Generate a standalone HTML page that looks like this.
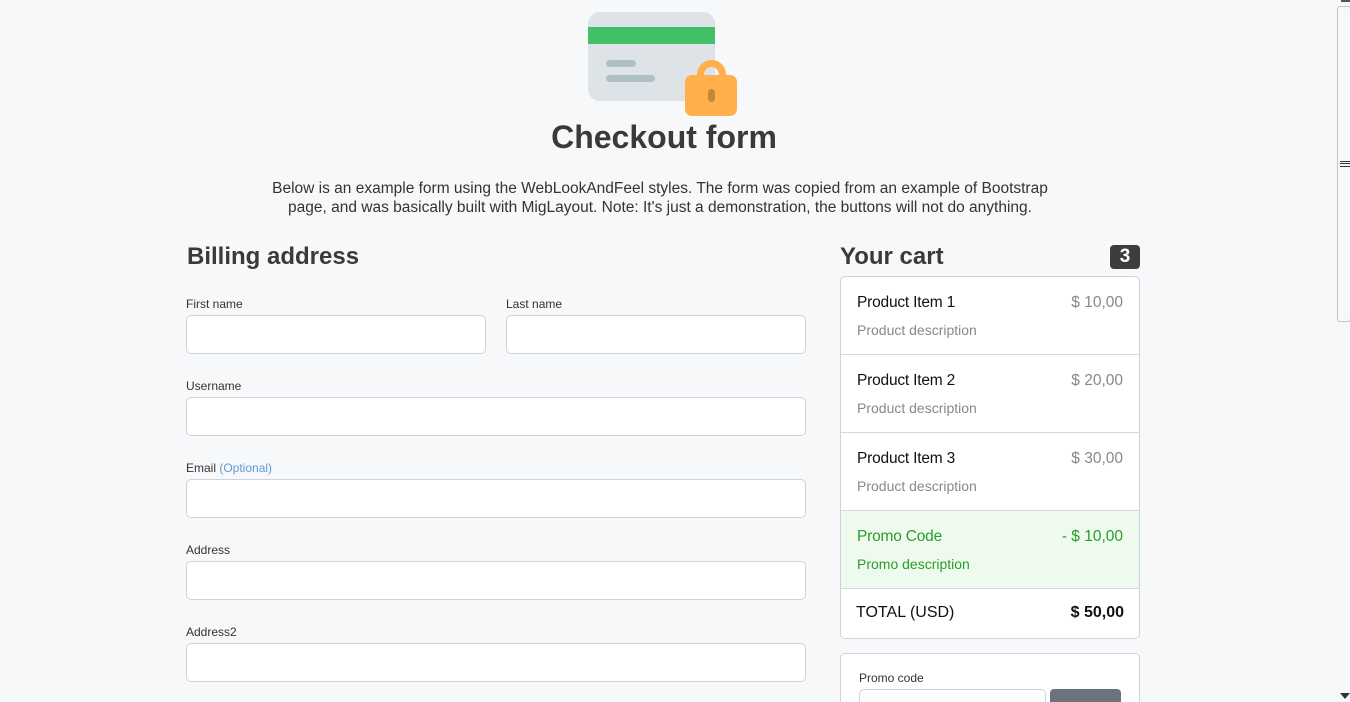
<!DOCTYPE html>
<html><head><meta charset="utf-8"><style>
*{margin:0;padding:0;box-sizing:border-box}
html,body{width:1350px;height:702px;overflow:hidden}
body{background:#f7f8fa;font-family:"Liberation Sans",sans-serif;color:#333}
#w{position:relative;width:1350px;height:702px;overflow:hidden}
.a{position:absolute}
.lbl{font-size:12px;color:#333}
.in{position:absolute;background:#fff;border:1px solid #ced3da;border-radius:5px;height:39px}
.h{font-weight:bold;font-size:24px;color:#3a3a3a}
.cart{left:840px;top:276px;width:300px;height:363px;background:#fff;border:1px solid #ced3da;border-radius:5px;overflow:hidden}
.row{position:absolute;left:0;width:298px;height:78px;border-bottom:1px solid #d5d9de}
.row .t{position:absolute;left:16px;top:17px;font-size:15.5px;color:#111;letter-spacing:-0.2px}
.row .p{position:absolute;right:16px;top:17px;font-size:15.5px;color:#888}
.row .d{position:absolute;left:16px;top:45px;font-size:14px;color:#888}
</style></head><body><div id="w">
<svg class="a" style="left:588px;top:12px" width="152" height="105" viewBox="0 0 152 105">
<rect x="0" y="0" width="127" height="89" rx="12" fill="#dde3e7"/>
<rect x="0" y="15" width="127" height="17" fill="#42c067"/>
<rect x="18" y="48" width="30" height="7" rx="3.5" fill="#aebfc6"/>
<rect x="18" y="63" width="49" height="7" rx="3.5" fill="#aebfc6"/>
<path d="M112.5 66 v-3.5 a11 11 0 0 1 22 0 v3.5" stroke="#ffb04a" stroke-width="7" fill="none"/>
<rect x="97" y="63" width="52" height="41" rx="7" fill="#ffb04a"/>
<rect x="120" y="77" width="7" height="13" rx="3.5" fill="#c4873a"/>
</svg>
<div class="a" style="left:0;width:1328px;top:119px;text-align:center;font-weight:bold;font-size:32px;color:#3a3a3a">Checkout form</div>
<div class="a" style="left:0;width:1320px;top:179px;text-align:center;font-size:15.5px;line-height:19px;color:#333">Below is an example form using the WebLookAndFeel styles. The form was copied from an example of Bootstrap<br>page, and was basically built with MigLayout. Note: It's just a demonstration, the buttons will not do anything.</div>
<div class="a h" style="left:187px;top:243px">Billing address</div>
<div class="a lbl" style="left:186px;top:297px">First name</div>
<div class="a lbl" style="left:506px;top:297px">Last name</div>
<div class="in" style="left:186px;top:315px;width:300px"></div>
<div class="in" style="left:506px;top:315px;width:300px"></div>
<div class="a lbl" style="left:186px;top:379px">Username</div>
<div class="in" style="left:186px;top:397px;width:620px"></div>
<div class="a lbl" style="left:186px;top:461px">Email <span style="color:#5b9bd5">(Optional)</span></div>
<div class="in" style="left:186px;top:479px;width:620px"></div>
<div class="a lbl" style="left:186px;top:543px">Address</div>
<div class="in" style="left:186px;top:561px;width:620px"></div>
<div class="a lbl" style="left:186px;top:625px">Address2</div>
<div class="in" style="left:186px;top:643px;width:620px"></div>
<div class="a h" style="left:840px;top:243px">Your cart</div>
<div class="a" style="left:1110px;top:245px;width:30px;height:24px;background:#3d3d3d;border-radius:4px;color:#fff;font-weight:bold;font-size:19px;text-align:center;line-height:24px">3</div>
<div class="a cart">
<div class="row" style="top:0"><div class="t">Product Item 1</div><div class="p">$ 10,00</div><div class="d">Product description</div></div>
<div class="row" style="top:78px"><div class="t">Product Item 2</div><div class="p">$ 20,00</div><div class="d">Product description</div></div>
<div class="row" style="top:156px"><div class="t">Product Item 3</div><div class="p">$ 30,00</div><div class="d">Product description</div></div>
<div class="row" style="top:234px;background:#eefaee"><div class="t" style="color:#2a9d2a">Promo Code</div><div class="p" style="color:#2a9d2a">- $ 10,00</div><div class="d" style="color:#2a9d2a">Promo description</div></div>
<div class="a" style="left:15px;top:327px;font-size:16px;color:#111">TOTAL (USD)</div>
<div class="a" style="right:15px;top:327px;font-size:16px;font-weight:bold;color:#111">$ 50,00</div>
</div>
<div class="a" style="left:840px;top:653px;width:300px;height:70px;background:#fff;border:1px solid #ced3da;border-radius:5px"></div>
<div class="a lbl" style="left:859px;top:671px">Promo code</div>
<div class="in" style="left:859px;top:689px;width:187px"></div>
<div class="a" style="left:1050px;top:689px;width:71px;height:30px;background:#6c737b;border-radius:4px"></div>
<div class="a" style="left:1337px;top:6px;width:14px;height:316px;border:1px solid #c4c4c4;border-radius:3px;background:#f7f8fa"></div>
<div class="a" style="left:1340px;top:161px;width:10px;height:6px;border-top:1px solid #333;border-bottom:1px solid #333"></div>
<div class="a" style="left:1340px;top:163px;width:10px;height:1px;background:#333"></div>
<div class="a" style="left:1341px;top:0;width:9px;height:2px;background:#555"></div>
<div class="a" style="left:1340px;top:693px;width:0;height:0;border-left:5px solid transparent;border-right:5px solid transparent;border-top:6px solid #333"></div>
</div></body></html>
